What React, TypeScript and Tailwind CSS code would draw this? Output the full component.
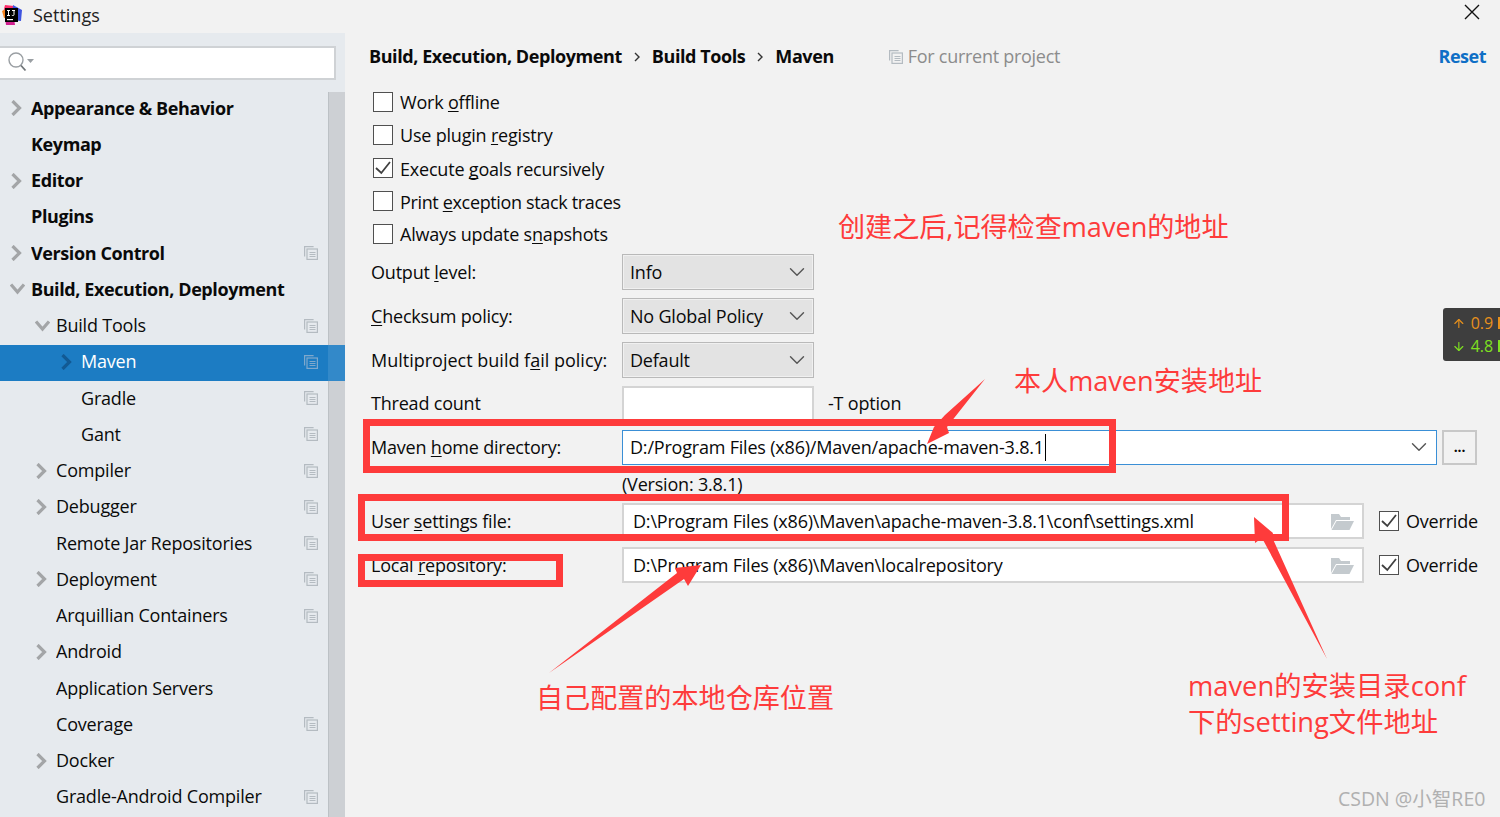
import React from 'react';
import { ArrowDown, ArrowUp, ChevronDown } from 'lucide-react';

const UI_FONT = "font-['Open_Sans','Noto_Sans_CJK_SC',sans-serif]";

type NavItem = {
  label: string;
  level: 0 | 1 | 2;
  arrow?: 'right' | 'down';
  bold?: boolean;
  copy?: boolean;
  selected?: boolean;
};

const NAV_ITEMS: NavItem[] = [
  { label: 'Appearance & Behavior', level: 0, arrow: 'right', bold: true },
  { label: 'Keymap', level: 0, bold: true },
  { label: 'Editor', level: 0, arrow: 'right', bold: true },
  { label: 'Plugins', level: 0, bold: true },
  { label: 'Version Control', level: 0, arrow: 'right', bold: true, copy: true },
  { label: 'Build, Execution, Deployment', level: 0, arrow: 'down', bold: true },
  { label: 'Build Tools', level: 1, arrow: 'down', copy: true },
  { label: 'Maven', level: 2, arrow: 'right', copy: true, selected: true },
  { label: 'Gradle', level: 2, copy: true },
  { label: 'Gant', level: 2, copy: true },
  { label: 'Compiler', level: 1, arrow: 'right', copy: true },
  { label: 'Debugger', level: 1, arrow: 'right', copy: true },
  { label: 'Remote Jar Repositories', level: 1, copy: true },
  { label: 'Deployment', level: 1, arrow: 'right', copy: true },
  { label: 'Arquillian Containers', level: 1, copy: true },
  { label: 'Android', level: 1, arrow: 'right' },
  { label: 'Application Servers', level: 1 },
  { label: 'Coverage', level: 1, copy: true },
  { label: 'Docker', level: 1, arrow: 'right' },
  { label: 'Gradle-Android Compiler', level: 1, copy: true },
];

function TreeArrow({ dir, selected }: { dir: 'right' | 'down'; selected?: boolean }) {
  return (
    <svg width="15" height="16" viewBox="0 0 15 16" fill="none" className="shrink-0">
      <path
        d={dir === 'right' ? 'M2.5 1 9.5 8 2.5 15' : 'M1 3.5 7.5 11 14 3.5'}
        stroke={selected ? '#125a94' : '#a3a5a7'}
        strokeWidth="3.2"
      />
    </svg>
  );
}

function CopyIcon({ selected }: { selected?: boolean }) {
  return (
    <svg width="14" height="14" viewBox="0 0 14 14" fill="none" stroke={selected ? '#7fa8cc' : '#b4bbc1'} strokeWidth="1.2" className="shrink-0">
      <path d="M.6 10.5V.6h9" />
      <rect x="3" y="3" width="10.4" height="10.4" />
      <path d="M5.5 6.5h6M5.5 8.5h6M5.5 10.5h6" />
    </svg>
  );
}

function NavRow({ item }: { item: NavItem }) {
  const indent = item.level === 0 ? 'pl-[10px]' : item.level === 1 ? 'pl-[35px]' : 'pl-[60px]';
  return (
    <div
      className={`relative z-10 flex h-[36.25px] items-center pr-[27px] pb-[2px] text-[18px] ${indent} ${
        item.selected ? 'bg-[#1c7cc3] text-white' : 'text-[#0a0a0a]'
      } ${item.bold ? 'font-bold tracking-[-0.4px]' : 'tracking-[-0.2px]'}`}
    >
      <span className="flex w-[21px] shrink-0 items-center">
        {item.arrow && <TreeArrow dir={item.arrow} selected={item.selected} />}
      </span>
      <span className="flex-1 truncate">{item.label}</span>
      {item.copy && <CopyIcon selected={item.selected} />}
      {item.selected && <span className="absolute top-0 right-0 bottom-0 w-[17px] bg-white/10" />}
    </div>
  );
}

function Sidebar() {
  return (
    <aside className="flex w-[345px] shrink-0 flex-col bg-[#e6eaee]">
      <div className="pt-[13px] pr-[9px]">
        <div className="flex h-[34px] items-center border-2 border-l-0 border-[#cfd2d5] bg-white pl-[8px]">
          <svg width="27" height="22" viewBox="0 0 27 22" fill="none">
            <circle cx="8" cy="8" r="7" stroke="#9a9fa3" strokeWidth="1.4" />
            <path d="m13 13.5 4.5 5" stroke="#6f7477" strokeWidth="1.8" />
            <path d="M19 7h7l-3.5 4z" fill="#9a9fa3" />
          </svg>
        </div>
      </div>
      <div className="relative mt-[10px] flex-1 overflow-hidden pt-[1px]">
        <div className="absolute top-[2px] right-0 bottom-0 w-[17px] border-l border-[#bcc1c5] bg-[#cdd0d4]" />
        {NAV_ITEMS.map((item) => (
          <NavRow key={item.label} item={item} />
        ))}
      </div>
    </aside>
  );
}

function Check({ checked }: { checked?: boolean }) {
  return (
    <span className="flex h-[20px] w-[20px] shrink-0 items-center justify-center border-[1.5px] border-[#505050] bg-white">
      {checked && (
        <svg width="16" height="14" viewBox="0 0 16 14" fill="none">
          <path d="M1 7 6.3 12 15 1" stroke="#404040" strokeWidth="1.8" />
        </svg>
      )}
    </span>
  );
}

function Mnemonic({ before, hot, after }: { before: string; hot: string; after: string }) {
  return (
    <>
      {before}
      <span className="underline underline-offset-2 [text-decoration-skip-ink:none]">{hot}</span>
      {after}
    </>
  );
}

function CheckRow({ checked, h, children }: { checked?: boolean; h: string; children: React.ReactNode }) {
  return (
    <div className={`flex items-center gap-[7px] pl-[4px] ${h}`}>
      <Check checked={checked} />
      <span className="pt-[2px]">{children}</span>
    </div>
  );
}

function Combo({ value }: { value: string }) {
  return (
    <div className="flex h-[36px] w-[192px] items-center justify-between border border-[#b9b9b9] bg-[#e3e3e3] pr-[3px] pl-[7px] shadow-[inset_0_0_0_1px_#f0f0f0]">
      <span>{value}</span>
      <ChevronDown size={26} strokeWidth={1.3} className="text-[#555]" />
    </div>
  );
}

function FormRow({ label, h, children }: { label: React.ReactNode; h: string; children: React.ReactNode }) {
  return (
    <div className={`flex items-center ${h}`}>
      <span className="w-[253px] shrink-0 pl-[2px]">{label}</span>
      {children}
    </div>
  );
}

function FolderIcon() {
  return (
    <svg width="24" height="19" viewBox="0 0 24 19" className="shrink-0">
      <path d="M1 2h8l2 3h9v3H6L1 17z" fill="#c4cace" />
      <path d="M6.5 9H24l-4.5 9H1.5z" fill="#c4cace" />
    </svg>
  );
}

function PathRow({ label, value, h }: { label: React.ReactNode; value: string; h: string }) {
  return (
    <FormRow label={label} h={h}>
      <div className="flex h-[36px] w-[742px] items-center justify-between border-2 border-[#d4d4d4] bg-white pr-[8px] pl-[9px]">
        <span>{value}</span>
        <FolderIcon />
      </div>
      <span className="ml-[15px] flex items-center gap-[7px]">
        <Check checked />
        <span>Override</span>
      </span>
    </FormRow>
  );
}

function Crumb() {
  return (
    <svg width="8" height="10" viewBox="0 0 8 10" fill="none" className="mx-[11px]">
      <path d="m2 1 4 4-4 4" stroke="#333" strokeWidth="1.4" />
    </svg>
  );
}

function MainPanel() {
  return (
    <main className="flex-1 pr-[14px] pl-[24px] text-[18px] tracking-[-0.2px] text-[#0a0a0a]">
      <div className="flex h-[47px] items-center">
        <div className="flex items-center font-bold tracking-[-0.42px]">
          <span>Build, Execution, Deployment</span>
          <Crumb />
          <span>Build Tools</span>
          <Crumb />
          <span>Maven</span>
        </div>
        <div className="ml-[55px] flex items-center gap-[5px] text-[#8c8c8c]">
          <svg width="14" height="14" viewBox="0 0 14 14" fill="none" stroke="#b4bbc1" strokeWidth="1.2">
            <path d="M.6 10.5V.6h9" />
            <rect x="3" y="3" width="10.4" height="10.4" />
            <path d="M5.5 6.5h6M5.5 8.5h6M5.5 10.5h6" />
          </svg>
          <span className="tracking-[-0.28px]">For current project</span>
        </div>
        <span className="ml-auto font-bold tracking-[-0.5px] text-[#0f6fc6]">Reset</span>
      </div>

      <div className="mt-[5px]">
        <CheckRow h="h-[33px]"><Mnemonic before="Work " hot="o" after="ffline" /></CheckRow>
        <CheckRow h="h-[33px]"><Mnemonic before="Use plugin " hot="r" after="egistry" /></CheckRow>
        <CheckRow checked h="h-[34px]"><Mnemonic before="Execute " hot="g" after="oals recursively" /></CheckRow>
        <CheckRow h="h-[32px]"><span className="tracking-[-0.35px]"><Mnemonic before="Print " hot="e" after="xception stack traces" /></span></CheckRow>
        <CheckRow h="h-[33px]"><Mnemonic before="Always update s" hot="n" after="apshots" /></CheckRow>
      </div>

      <div>
        <FormRow label={<Mnemonic before="Output " hot="l" after="evel:" />} h="h-[44px]">
          <Combo value="Info" />
        </FormRow>
        <FormRow label={<Mnemonic before="" hot="C" after="hecksum policy:" />} h="h-[44px]">
          <Combo value="No Global Policy" />
        </FormRow>
        <FormRow label={<span className="tracking-[0px]"><Mnemonic before="Multiproject build f" hot="a" after="il policy:" /></span>} h="h-[44px]">
          <Combo value="Default" />
        </FormRow>
        <FormRow label="Thread count" h="h-[43px]">
          <div className="h-[36px] w-[192px] border-2 border-[#d4d4d4] bg-white" />
          <span className="ml-[14px]">-T option</span>
        </FormRow>
        <FormRow label={<Mnemonic before="Maven " hot="h" after="ome directory:" />} h="h-[44px]">
          <div className="flex h-[35px] w-[815px] items-center justify-between border border-[#3a8fd6] bg-white pr-[4px] pl-[7px]">
            <span className="border-r border-black pr-px">D:/Program Files (x86)/Maven/apache-maven-3.8.1</span>
            <ChevronDown size={26} strokeWidth={1.3} className="text-[#555]" />
          </div>
          <div className="ml-[5px] flex h-[35px] w-[35px] items-center justify-center border-2 border-[#c8c8c8] text-[14px] leading-none font-bold">...</div>
        </FormRow>
        <div className="flex h-[30px] items-center pl-[253px]">(Version: 3.8.1)</div>
        <PathRow
          label={<Mnemonic before="User " hot="s" after="ettings file:" />}
          value="D:\Program Files (x86)\Maven\apache-maven-3.8.1\conf\settings.xml"
          h="h-[44px]"
        />
        <PathRow
          label={<Mnemonic before="Local " hot="r" after="epository:" />}
          value="D:\Program Files (x86)\Maven\localrepository"
          h="h-[44px]"
        />
      </div>
    </main>
  );
}

function RedBox({ className }: { className: string }) {
  return <div className={`pointer-events-none absolute border-[7px] border-[#fe3b3b] ${className}`} />;
}

const NOTE = 'pointer-events-none absolute whitespace-nowrap text-[#fe3b3b]';

function Annotations() {
  return (
    <>
      <RedBox className="top-[419px] left-[363px] h-[54px] w-[753px]" />
      <RedBox className="top-[494px] left-[358px] h-[47px] w-[931px]" />
      <RedBox className="top-[554px] left-[358px] h-[33px] w-[205px]" />

      {/* the three hand drawn arrows */}
      <svg width="1500" height="817" className="pointer-events-none absolute top-0 left-0" fill="#fe3b3b">
        <polygon points="985,379 945,415 934,427 927,444 949,433 947,427" />
        <polygon points="549,673 677,573 675,568 701,565 688,586 684,579" />
        <polygon points="1327,659 1272,537 1273,533 1254,517 1255,543 1262,538" />
      </svg>

      <div className={`${NOTE} top-[208px] left-[838px] text-[27.1px] leading-[38px]`}>创建之后,记得检查maven的地址</div>
      <div className={`${NOTE} top-[362px] left-[1014px] text-[27.1px] leading-[38px]`}>本人maven安装地址</div>
      <div className={`${NOTE} top-[679px] left-[536px] text-[27.1px] leading-[38px]`}>自己配置的本地仓库位置</div>
      <div className={`${NOTE} top-[668px] left-[1188px] text-[27.3px] leading-[36px]`}>
        maven的安装目录conf
        <br />
        下的setting文件地址
      </div>
      <div className="pointer-events-none absolute top-[786px] left-[1338px] text-[19.5px] leading-[26px] whitespace-nowrap text-[#b0b0b0]">
        CSDN @小智RE0
      </div>

      {/* network speed widget from the desktop, runs off the screen edge */}
      <div className="absolute top-[308px] right-0 flex h-[53px] w-[57px] flex-col justify-center rounded-l-[3px] bg-[#3e3e3e] pl-[10px] text-[16px] leading-[23px]">
        <span className="flex items-center gap-[5px] text-[#e8911c]">
          <ArrowUp size={15} strokeWidth={2} className="-ml-[1px]" />
          0.9
          <span className="ml-auto h-[12px] w-[2px] bg-[#e8911c]" />
        </span>
        <span className="flex items-center gap-[5px] text-[#7ee020]">
          <ArrowDown size={15} strokeWidth={2} className="-ml-[1px]" />
          4.8
          <span className="ml-auto h-[12px] w-[2px] bg-[#7ee020]" />
        </span>
      </div>
    </>
  );
}

export default function App() {
  return (
    <div className={`relative h-[817px] w-[1500px] overflow-hidden bg-[#f2f2f2] ${UI_FONT}`}>
      <header className="flex h-[33px] items-center justify-between pr-[20px] pl-[2px] text-[18px] text-[#222]">
        <div className="mb-[3px] flex items-center gap-[11px]">
          <svg width="20" height="20" viewBox="0 0 20 20">
            <polygon points="3,0 12,1 8,10 1,8" fill="#fc2d6a" />
            <polygon points="11,0 20,5 19,16 10,15" fill="#3f54e0" />
            <polygon points="0,6 4,4 5,13 2,13" fill="#f7831e" />
            <polygon points="3,12 12,13 13,20 4,20" fill="#d21f8f" />
            <rect x="3" y="3" width="13" height="14" fill="#000" />
            <rect x="5" y="14" width="6" height="1.2" fill="#fff" />
            <path d="M5 5.5h3M6.5 5.5v5M5 10.5h3M10 5.5h3M12 5.5v4.2c0 1-1.4 1-2.2.5" stroke="#fff" strokeWidth="1" fill="none" />
          </svg>
          <span>Settings</span>
        </div>
        <svg width="16" height="16" viewBox="0 0 16 16" fill="none" className="mb-[9px]">
          <path d="m1 1 14 14M15 1 1 15" stroke="#111" strokeWidth="1.4" />
        </svg>
      </header>
      <div className="flex h-[784px]">
        <Sidebar />
        <MainPanel />
      </div>
      <Annotations />
    </div>
  );
}
